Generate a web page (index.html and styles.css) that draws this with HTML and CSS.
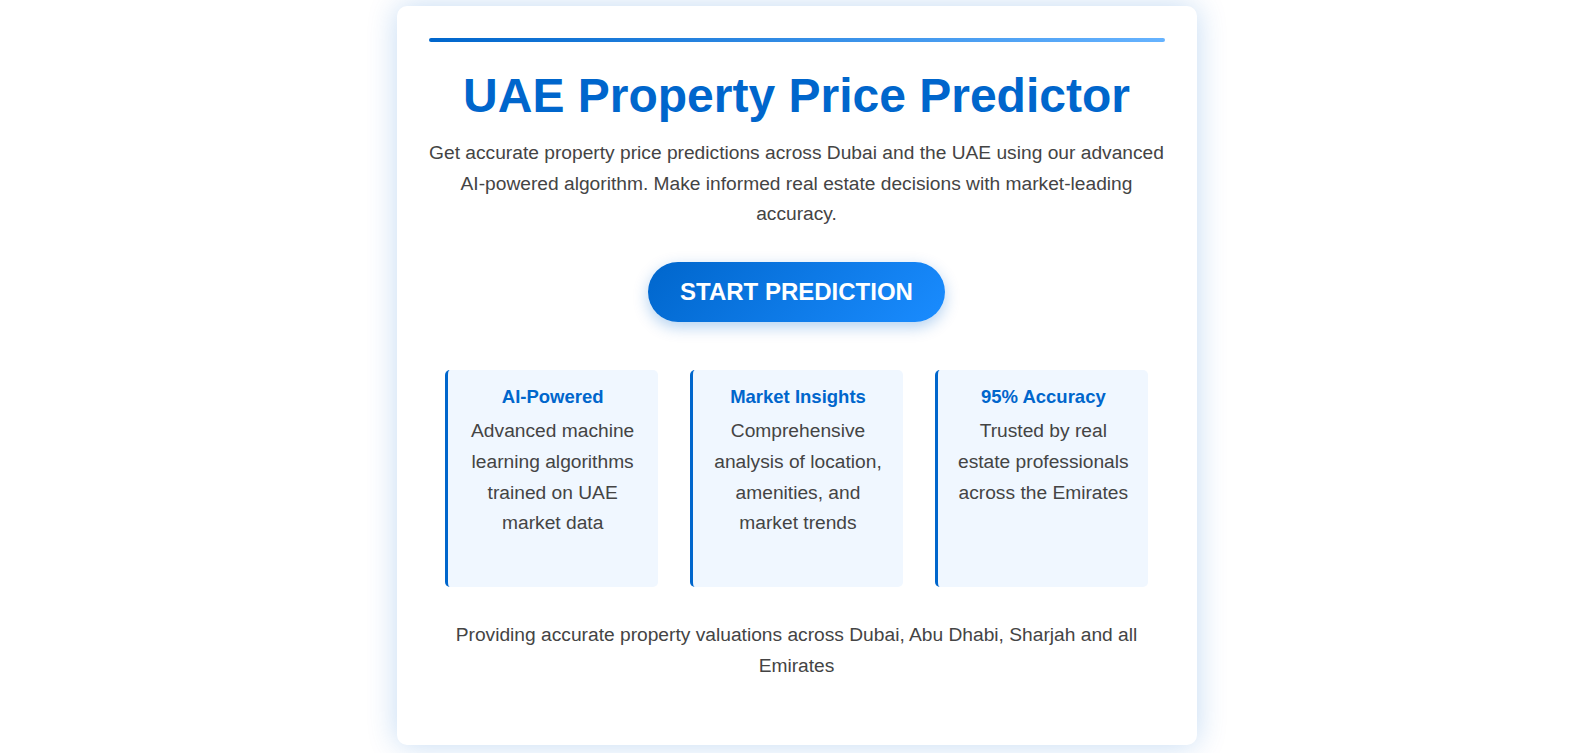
FILE: index.html
```html
<!DOCTYPE html>
<html lang="en">
<head>
<meta charset="utf-8">
<title>UAE Property Price Predictor</title>
<link rel="stylesheet" href="styles.css">
</head>
<body>
  <main class="card">
    <div class="accent-bar"></div>
    <h1 class="title">UAE Property Price Predictor</h1>
    <p class="intro">Get accurate property price predictions across Dubai and the UAE using our advanced AI-powered algorithm. Make informed real estate decisions with market-leading accuracy.</p>
    <div class="cta-wrap">
      <button class="cta">START PREDICTION</button>
    </div>
    <section class="features">
      <div class="feature">
        <h3 class="feature-title">AI-Powered</h3>
        <p class="feature-text">Advanced machine learning algorithms trained on UAE market data</p>
      </div>
      <div class="feature">
        <h3 class="feature-title">Market Insights</h3>
        <p class="feature-text">Comprehensive analysis of location, amenities, and market trends</p>
      </div>
      <div class="feature">
        <h3 class="feature-title">95% Accuracy</h3>
        <p class="feature-text">Trusted by real estate professionals across the Emirates</p>
      </div>
    </section>
    <p class="footer-text">Providing accurate property valuations across Dubai, Abu Dhabi, Sharjah and all Emirates</p>
  </main>
</body>
</html>
```
FILE: styles.css
```css
* {
  box-sizing: border-box;
}

html, body {
  margin: 0;
  padding: 0;
}

body {
  min-height: 100vh;
  display: flex;
  justify-content: center;
  align-items: flex-start;
  padding: 6px 0 0 14px;
  background: #ffffff;
  font-family: "Liberation Sans", Arial, sans-serif;
  color: #444;
}

.card {
  width: 800px;
  background: #ffffff;
  border-radius: 10px;
  padding: 32px 32px 34px;
  box-shadow: 0 0 30px rgba(0, 102, 204, 0.24);
  text-align: center;
}

.accent-bar {
  height: 4px;
  border-radius: 2px;
  background: linear-gradient(90deg, #0066cc, #66b3ff);
  margin-bottom: 26px;
}

.title {
  margin: 0 0 15px;
  font-size: 48px;
  font-weight: 700;
  line-height: normal;
  color: #0066cc;
}

.intro {
  margin: 0;
  font-size: 19.2px;
  line-height: 1.6;
  color: #444;
}

.cta-wrap {
  margin-top: 32px;
  display: flex;
  justify-content: center;
}

.cta {
  font-family: "Liberation Sans", Arial, sans-serif;
  font-size: 24px;
  font-weight: 700;
  color: #ffffff;
  border: none;
  border-radius: 40px;
  padding: 16px 32px;
  line-height: normal;
  background: linear-gradient(135deg, #0066cc, #1a8cff);
  box-shadow: 0 5px 15px rgba(0, 102, 204, 0.3);
  cursor: pointer;
}

.features {
  margin: 48px 16px 0;
  display: grid;
  grid-template-columns: repeat(3, 1fr);
  gap: 32px;
}

.feature {
  background: #f0f7ff;
  border-left: 3px solid #0066cc;
  border-radius: 5px;
  padding: 16px 16px 48px;
}

.feature-title {
  margin: 0 0 8px;
  font-size: 18.5px;
  font-weight: 700;
  line-height: normal;
  color: #0066cc;
}

.feature-text {
  margin: 0;
  font-size: 19.2px;
  line-height: 1.6;
  color: #444;
}

.footer-text {
  margin: 33px 0 30px;
  font-size: 19.2px;
  line-height: 1.6;
  color: #444;
}
```
